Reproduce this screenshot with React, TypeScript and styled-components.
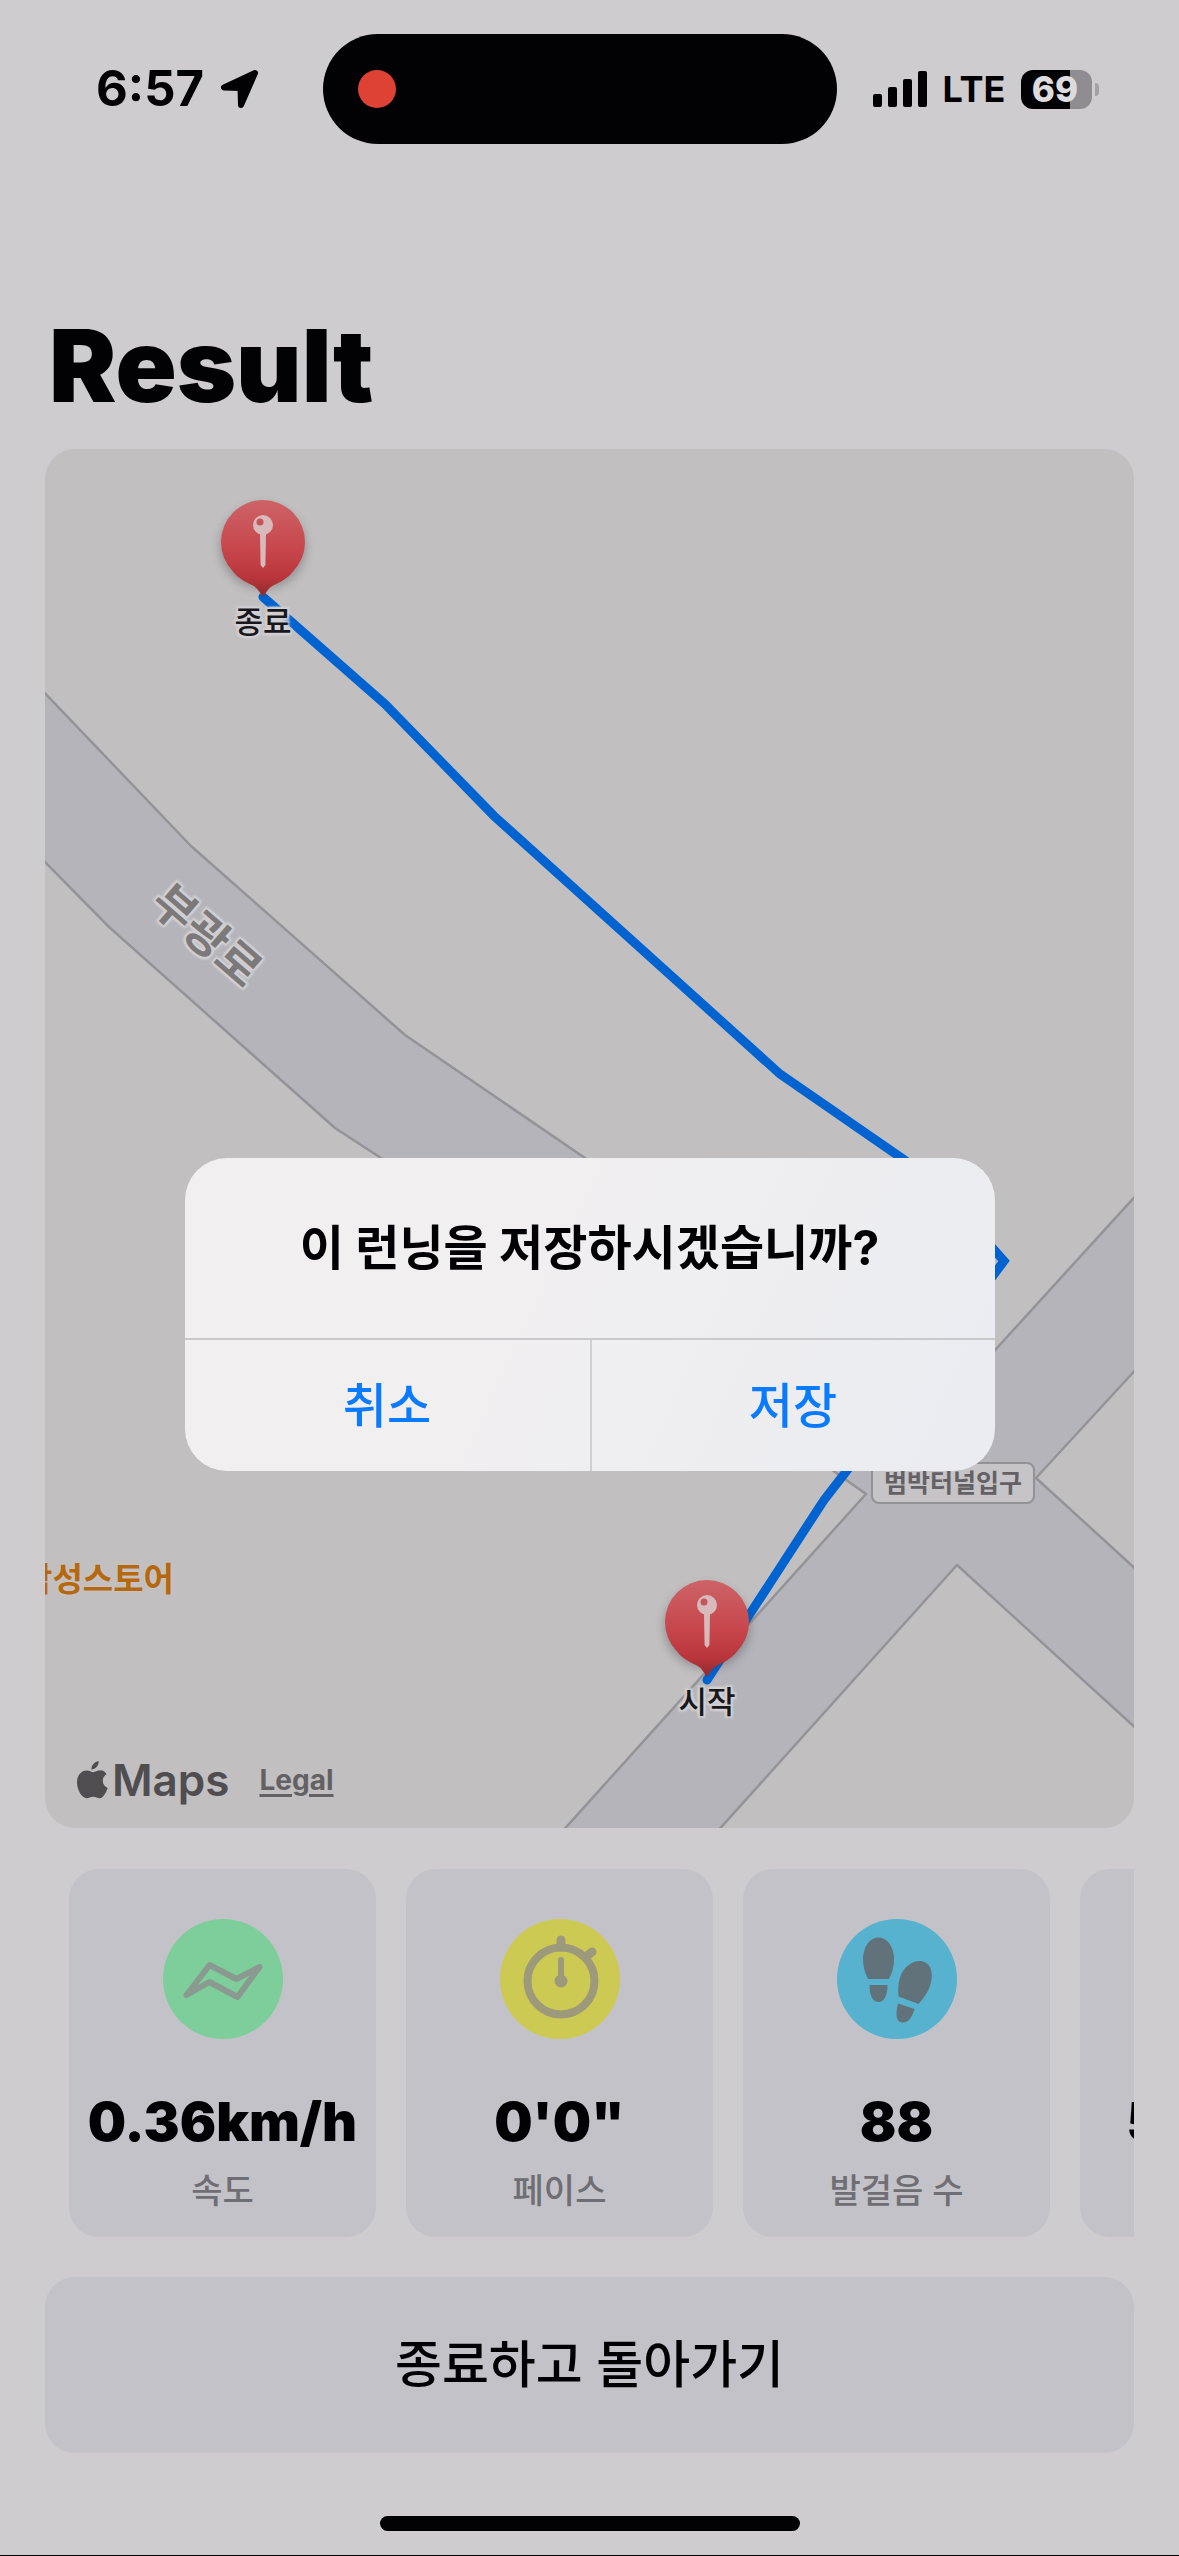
import React from "react";
import styled, { createGlobalStyle, css } from "styled-components";

const GlobalStyle = createGlobalStyle`
  *, *::before, *::after { box-sizing: border-box; }
  html { background: #cecccf; }
  body {
    margin: 0;
    color: #020204;
    font-family: Inter, "Noto Sans CJK KR", sans-serif;
  }
  h1, h2, p, dl, dd, dt { margin: 0; }
  button { font: inherit; color: inherit; border: 0; background: none; padding: 0; cursor: pointer; }
`;

const Screen = styled.div`
  display: flex;
  flex-direction: column;
  min-height: 100vh;
  background: #cecccf;
  border-bottom: 1px solid #020204;
`;

const StatusBar = styled.header`
  display: grid;
  grid-template-columns: 1fr 514px 1fr;
  align-items: center;
  padding: 34px 20px 0 0;
`;

const StatusSide = styled.div<{ $end?: boolean }>`
  display: flex;
  align-items: center;
  gap: 16px;
  padding-left: ${(p) => (p.$end ? 36 : 96)}px;
`;

const Clock = styled.span`
  font-size: 49px;
  line-height: 56px;
  font-weight: 700;
`;

const Network = styled.span`
  font-size: 36px;
  line-height: 56px;
  font-weight: 700;
`;

const Island = styled.div`
  display: flex;
  align-items: center;
  height: 110px;
  padding: 0 35px;
  border-radius: 55px;
  background: #020204;
`;

const RecordingDot = styled.span`
  width: 38px;
  height: 38px;
  border-radius: 50%;
  background: #de4235;
`;

const Battery = styled.span`
  display: flex;
  align-items: center;
  gap: 3px;
`;

const BatteryBody = styled.span`
  width: 71px;
  height: 39px;
  padding-right: 4px;
  border-radius: 12px;
  background: linear-gradient(90deg, #020204 69%, #8f8d91 69%);
  color: #dddbde;
  font-size: 35px;
  line-height: 39px;
  font-weight: 800;
  text-align: center;
`;

const BatteryNub = styled.span`
  width: 4px;
  height: 13px;
  border-radius: 0 4px 4px 0;
  background: #a3a1a4;
`;

const Content = styled.main`
  flex: 1;
  display: flex;
  flex-direction: column;
  padding: 161px 45px 24px;
`;

const Title = styled.h1`
  margin: 0 0 24px;
  padding-left: 4px;
  font-size: 101px;
  line-height: 120px;
  font-weight: 900;
`;

const MapPanel = styled.section`
  position: relative;
  flex: 1;
  min-height: 900px;
  border-radius: 30px;
  overflow: hidden;
  background: #c1bfc0;
`;

const MapDrawing = styled.svg`
  position: absolute;
  inset: 0;
  width: 100%;
  height: 100%;
`;

const halo = css`
  text-shadow: 0 0 3px #d2d0d3, 2px 2px 2px #d2d0d3, -2px -2px 2px #d2d0d3,
    2px -2px 2px #d2d0d3, -2px 2px 2px #d2d0d3;
`;

const Place = styled.div<{ $x: number; $y: number; $turn?: number }>`
  position: absolute;
  left: ${(p) => p.$x}px;
  top: ${(p) => p.$y}px;
  transform: translate(-50%, -50%) rotate(${(p) => p.$turn ?? 0}deg);
  white-space: nowrap;
`;

const PinName = styled(Place)`
  font-size: 31px;
  line-height: 36px;
  font-weight: 500;
  color: #18171c;
  ${halo}
`;

const RoadName = styled(Place)`
  font-size: 46px;
  line-height: 52px;
  font-weight: 700;
  color: #7b7979;
  ${halo}
`;

const ShopName = styled(Place)`
  font-size: 33px;
  line-height: 38px;
  font-weight: 700;
  color: #b4680f;
  text-shadow: 0 0 3px #d6c6b8;
`;

const StopName = styled(Place)`
  padding: 0 11px;
  border: 2px solid #939295;
  border-radius: 8px;
  background: #c6c4c6;
  font-size: 25px;
  line-height: 38px;
  font-weight: 700;
  color: #636165;
`;

const Attribution = styled.div`
  position: absolute;
  left: 32px;
  bottom: 20px;
  display: flex;
  align-items: center;
  gap: 30px;
  color: #4f4d50;
`;

const MapsBrand = styled.span`
  display: flex;
  align-items: center;
  gap: 4px;
  font-size: 44px;
  line-height: 56px;
  font-weight: 600;
`;

const LegalLink = styled.a`
  color: #636164;
  font-size: 28px;
  line-height: 36px;
  font-weight: 700;
  text-decoration: underline;
  text-decoration-thickness: 3px;
  text-underline-offset: 4px;
`;

const Stats = styled.dl`
  display: flex;
  gap: 30px;
  margin-top: 41px;
  padding-left: 24px;
  overflow: hidden;
`;

const StatCard = styled.div`
  flex: 0 0 307px;
  display: flex;
  flex-direction: column;
  align-items: center;
  padding: 50px 0 24px;
  border-radius: 30px;
  background: #c3c2c8;
`;

const StatIcon = styled.div<{ $color: string }>`
  width: 120px;
  height: 120px;
  border-radius: 50%;
  background: ${(p) => p.$color};
  svg { display: block; }
`;

const StatValue = styled.dd`
  order: 1;
  margin-top: 50px;
  font-size: 54px;
  line-height: 66px;
  font-weight: 900;
  white-space: nowrap;
`;

const StatLabel = styled.dt`
  order: 2;
  margin-top: 14px;
  font-size: 34px;
  line-height: 44px;
  font-weight: 500;
  color: #6f6e75;
`;

const FinishButton = styled.button`
  margin-top: 40px;
  height: 176px;
  border-radius: 30px;
  background: #c3c2c8;
  font-size: 51px;
  line-height: 60px;
  font-weight: 500;
`;

const HomeIndicator = styled.div`
  width: 420px;
  height: 15px;
  margin: 63px auto 0;
  border-radius: 8px;
  background: #020204;
`;

const AlertLayer = styled.div`
  position: fixed;
  inset: 0;
  display: flex;
  align-items: center;
  justify-content: center;
  padding-top: 73px;
`;

const Alert = styled.section`
  width: 810px;
  max-width: 90vw;
  border-radius: 42px;
  overflow: hidden;
  background: linear-gradient(115deg, #f1eff0 40%, #eaecf1 100%);
`;

const AlertTitle = styled.h2`
  padding: 60px 40px;
  font-size: 48px;
  line-height: 60px;
  font-weight: 700;
  text-align: center;
`;

const AlertActions = styled.div`
  display: grid;
  grid-template-columns: 1fr 1fr;
  border-top: 2px solid #c9c8ca;
`;

const AlertButton = styled.button`
  height: 131px;
  color: #0a7aff;
  font-size: 48px;
  line-height: 60px;
  font-weight: 500;
  & + & { border-left: 2px solid #d0cfd1; }
`;

const ArrowIcon = () => (
  <svg width="40" height="40" viewBox="0 0 40 40" aria-hidden="true">
    <path
      d="M35 4 4 18.500 20.500 19 21 36Z"
      fill="#020204"
      stroke="#020204"
      strokeWidth="6"
      strokeLinejoin="round"
    />
  </svg>
);

const SignalIcon = () => (
  <svg width="54" height="36" viewBox="0 0 54 36" fill="#020204" aria-hidden="true">
    <rect x="0" y="23" width="9" height="13" rx="2" />
    <rect x="15" y="16" width="9" height="20" rx="2" />
    <rect x="30" y="8" width="9" height="28" rx="2" />
    <rect x="45" y="0" width="9" height="36" rx="2" />
  </svg>
);

const AppleIcon = () => (
  <svg width="31" height="38" viewBox="0 0 31 38" fill="#4f4d50" aria-hidden="true">
    <path d="M21.600 0c.4 4.500-3.500 8.600-7.200 8.500C14 4.600 17.700.6 21.600 0Z" />
    <path d="M29.500 13.200c-5.600 3.400-4.600 11.500 1.200 13.700-1.300 3.900-4.500 10.300-8 10.300-2.500 0-3.500-1.500-6.500-1.500s-4.200 1.500-6.500 1.500C5 37.200 0 29 0 21.500c0-7.700 4.800-12 9.600-12 3 0 4.800 1.700 6.700 1.700 1.800 0 4-1.900 7.400-1.900 2.300 0 4.500 1.300 5.800 3.900Z" />
  </svg>
);

const SpeedIcon = () => (
  <svg width="120" height="120" viewBox="0 0 120 120" aria-hidden="true">
    <path
      d="M23.500 76 46.500 46 73.500 60 96.500 48 74.500 78 46.500 63Z"
      fill="none"
      stroke="#8b9a91"
      strokeWidth="6"
      strokeLinejoin="round"
    />
  </svg>
);

const StopwatchIcon = () => (
  <svg width="120" height="120" viewBox="0 0 120 120" fill="none" stroke="#9c9a7b" strokeLinecap="round" aria-hidden="true">
    <circle cx="61" cy="62" r="33.500" strokeWidth="8" />
    <path d="M61 21v7M88 36l4-3" strokeWidth="9" />
    <path d="M61 41v20" strokeWidth="6" />
    <circle cx="61" cy="62" r="6.500" fill="#9c9a7b" stroke="none" />
  </svg>
);

const StepsIcon = () => (
  <svg width="120" height="120" viewBox="0 0 120 120" fill="#62727a" aria-hidden="true">
    <path d="M41.500 18.500c9 0 15.500 10 15.500 22 0 7-2 13.500-5 19.500H31c-3-6-5-12.500-5-19.500 0-12 6.500-22 15.500-22Z" />
    <path d="M32.500 66h18c0 10-3 17-9 17s-9-7-9-17Z" />
    <path d="M86 42.500c8.500 2 11 13 7 24.500-2.500 7-6.500 12-11.500 18L61.500 77.500c-.5-7-.5-12.500 1.500-19C66 48 77 40 86 42.500Z" />
    <path d="M61 84.500 77.500 90c-3 10-7 14-12.500 13.500S58 96 61 84.500Z" />
  </svg>
);

const Pin = ({ x, y }: { x: number; y: number }) => (
  <g transform={`translate(${x} ${y})`}>
    <ellipse cx="0" cy="-50" rx="43" ry="42" fill="#3c3a3d" opacity="0.350" filter="url(#pinShadow)" />
    <path
      d="M0 0C-3-4-5-9-11-12C-17-15-24-18-30-25.600A42 42 0 1 1 30-25.600C24-18 17-15 11-12C5-9 3-4 0 0Z"
      fill="url(#pinFill)"
    />
    <path d="M-3-63h6l-.6 31L0-29-2.400-32Z" fill="#d8b9bc" />
    <circle cx="0" cy="-72" r="10" fill="#d8b9bc" />
    <circle cx="-3" cy="-75" r="3.500" fill="#c4555a" />
  </g>
);

const stats = [
  { label: "속도", value: "0.36km/h", color: "#7dce9a", icon: <SpeedIcon /> },
  { label: "페이스", value: "0'0\"", color: "#cdca53", icon: <StopwatchIcon /> },
  { label: "발걸음 수", value: "88", color: "#56b2cf", icon: <StepsIcon /> },
  { label: "거리", value: "5.00km", color: "#d9886a", icon: null },
];

export default function App() {
  return (
    <>
      <GlobalStyle />
      <Screen>
        <StatusBar>
          <StatusSide>
            <Clock>6:57</Clock>
            <ArrowIcon />
          </StatusSide>
          <Island>
            <RecordingDot />
          </Island>
          <StatusSide $end>
            <SignalIcon />
            <Network>LTE</Network>
            <Battery>
              <BatteryBody>69</BatteryBody>
              <BatteryNub />
            </Battery>
          </StatusSide>
        </StatusBar>

        <Content>
          <Title>Result</Title>

          <MapPanel>
            <MapDrawing viewBox="0 0 1089 1379" preserveAspectRatio="xMinYMin slice" aria-hidden="true">
              <defs>
                <linearGradient id="pinFill" x1="0" y1="0" x2="0" y2="1">
                  <stop offset="0" stopColor="#cd6367" />
                  <stop offset="0.500" stopColor="#c7474d" />
                  <stop offset="0.800" stopColor="#b9353b" />
                  <stop offset="1" stopColor="#8f2a2f" />
                </linearGradient>
                <filter id="pinShadow" x="-30%" y="-30%" width="160%" height="160%">
                  <feGaussianBlur stdDeviation="5" />
                </filter>
              </defs>
              <g fill="#b4b4ba" stroke="#949397" strokeWidth="2.500" strokeLinejoin="round">
                <path d="M-6 238 146 397 360 586 540 709 860 990 951 900 1095 742V916L991 1029 1095 1124V1283L912 1116 670 1385H515L821 1045 790 1023 336 709 290 679 64 478-6 407Z" />
              </g>
              <path
                d="M218 148 340 255 449 367 735 625 858 710 890 734 959 812 800 1024 779 1051 662 1231"
                fill="none"
                stroke="#0063cf"
                strokeWidth="9"
                strokeLinecap="round"
                strokeLinejoin="miter"
              />
              <Pin x={218} y={148} />
              <Pin x={662} y={1228} />
            </MapDrawing>
            <PinName $x={218} $y={173}>종료</PinName>
            <PinName $x={662} $y={1253}>시작</PinName>
            <RoadName $x={162} $y={486} $turn={41}>부광로</RoadName>
            <StopName $x={908} $y={1034}>범박터널입구</StopName>
            <ShopName $x={53} $y={1130}>각성스토어</ShopName>
            <Attribution>
              <MapsBrand>
                <AppleIcon />
                Maps
              </MapsBrand>
              <LegalLink href="#legal">Legal</LegalLink>
            </Attribution>
          </MapPanel>

          <Stats>
            {stats.map((s) => (
              <StatCard key={s.label}>
                <StatIcon $color={s.color}>{s.icon}</StatIcon>
                <StatLabel>{s.label}</StatLabel>
                <StatValue>{s.value}</StatValue>
              </StatCard>
            ))}
          </Stats>

          <FinishButton type="button">종료하고 돌아가기</FinishButton>
          <HomeIndicator />
        </Content>
      </Screen>

      <AlertLayer>
        <Alert role="alertdialog" aria-modal="true" aria-labelledby="alert-title">
          <AlertTitle id="alert-title">이 런닝을 저장하시겠습니까?</AlertTitle>
          <AlertActions>
            <AlertButton type="button">취소</AlertButton>
            <AlertButton type="button">저장</AlertButton>
          </AlertActions>
        </Alert>
      </AlertLayer>
    </>
  );
}
